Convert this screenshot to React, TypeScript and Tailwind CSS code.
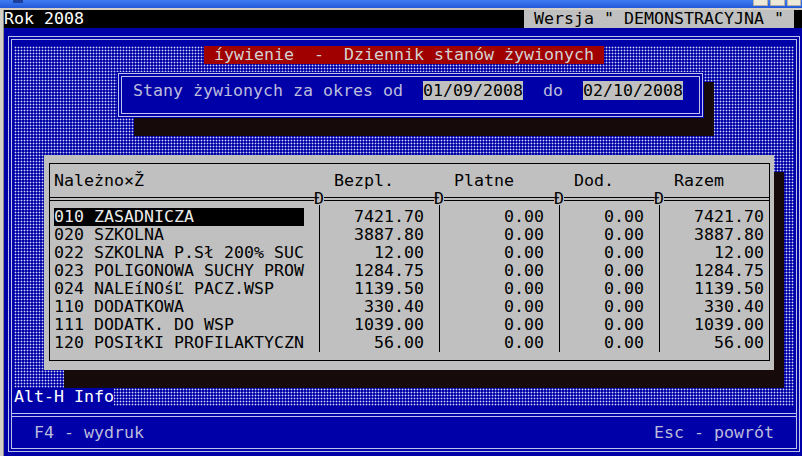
const FONT = "font-['DejaVu_Sans_Mono','Liberation_Mono',monospace] text-[16.61px] leading-[18px]";
const DOTS =
  "[background:radial-gradient(circle_at_1.5px_1.5px,#d4d4f4_0.8px,transparent_1.1px)_0_0/3px_3px_#0000a8]";
const SHADOW = "bg-[#160a0a]";
const LINE = "border-[#c0c0ec]";

const rows = [
  { name: '010 ZASADNICZA', bezpl: '7421.70', razem: '7421.70' },
  { name: '020 SZKOLNA', bezpl: '3887.80', razem: '3887.80' },
  { name: '022 SZKOLNA P.Sł 200% SUC', bezpl: '12.00', razem: '12.00' },
  { name: '023 POLIGONOWA SUCHY PROW', bezpl: '1284.75', razem: '1284.75' },
  { name: '024 NALEíNOśĽ PACZ.WSP', bezpl: '1139.50', razem: '1139.50' },
  { name: '110 DODATKOWA', bezpl: '330.40', razem: '330.40' },
  { name: '111 DODATK. DO WSP', bezpl: '1039.00', razem: '1039.00' },
  { name: '120 POSIłKI PROFILAKTYCZN', bezpl: '56.00', razem: '56.00' },
];

function TitleBar() {
  return (
    <div className="h-[8px] flex bg-gradient-to-b from-[#3f7df2] to-[#2358d6]">
      <div className="ml-[13px] w-[10px] h-[3px] bg-[#1c3f9c]" />
      <div className="flex-1" />
      <div className="flex gap-[2px] pr-[1px] h-[6px]">
        <div className="w-[15px] bg-[#ece9d8] border border-t-0 border-[#b4b0a4]" />
        <div className="w-[15px] bg-[#ece9d8] border border-t-0 border-[#b4b0a4]" />
        <div className="w-[14px] bg-[#ece9d8] border border-t-0 border-[#b4b0a4]" />
      </div>
    </div>
  );
}

function Separator({ w }: { w: string }) {
  return (
    <div className={`${w} pt-[7px]`}>
      <div className="h-[4px] border-y border-black" />
    </div>
  );
}

function Junction() {
  return <div className="w-[10px] h-[15px] leading-[18px]">Đ</div>;
}

function NumberColumn({ values, w, pr }: { values: string[]; w: string; pr: string }) {
  return (
    <div className={`${w} ${pr} pt-[3px] border-l border-black text-right`}>
      {values.map((v, i) => (
        <div key={i} className="h-[18px]">
          {v}
        </div>
      ))}
    </div>
  );
}

function StanyBox() {
  return (
    <div className="w-[587px] h-[46px] bg-[#0000a8] p-[1px]">
      <div className={`h-full border ${LINE} p-[2px]`}>
        <div className={`h-full border ${LINE} pl-[11px] pt-[5px] text-[#bcbcdc] whitespace-pre`}>
          {'Stany żywionych za okres od  '}
          <span className="bg-[#c0c0c0] text-black">01/09/2008</span>
          {'  do  '}
          <span className="bg-[#c0c0c0] text-black">02/10/2008</span>
        </div>
      </div>
    </div>
  );
}

function TablePanel() {
  const zeros = rows.map(() => '0.00');
  return (
    <div className="w-[730px] h-[215px] bg-[#c0c0c0] pt-[8px] pl-[5px] pr-[4px] pb-[9px] text-black">
      <div className="h-full border border-black flex flex-col">
        {/* header */}
        <div className="mt-[8px] h-[18px] pl-[4px] whitespace-pre">
          {'Należno×Ž                   Bezpl.      Platne      Dod.      Razem'}
        </div>

        {/* double line with junctions */}
        <div className="h-[15px] flex">
          <Separator w="w-[264px]" />
          <Junction />
          <Separator w="w-[110px]" />
          <Junction />
          <Separator w="w-[110px]" />
          <Junction />
          <Separator w="w-[90px]" />
          <Junction />
          <Separator w="w-[105px]" />
        </div>

        {/* body */}
        <div className="h-[147px] flex whitespace-pre">
          <div className="w-[269px] pl-[4px] pt-[3px]">
            {rows.map((r, i) => (
              <div key={i} className="h-[18px]">
                {i === 0 ? (
                  <span className="inline-block w-[250px] bg-black text-[#ececec]">{r.name}</span>
                ) : (
                  r.name
                )}
              </div>
            ))}
          </div>
          <NumberColumn values={rows.map((r) => r.bezpl)} w="w-[120px]" pr="pr-[15px]" />
          <NumberColumn values={zeros} w="w-[120px]" pr="pr-[15px]" />
          <NumberColumn values={zeros} w="w-[100px]" pr="pr-[15px]" />
          <NumberColumn values={rows.map((r) => r.razem)} w="w-[110px]" pr="pr-[5px]" />
        </div>
      </div>
    </div>
  );
}

export default function App() {
  return (
    <div className={`w-[802px] h-[456px] overflow-hidden bg-[#0000a8] flex flex-col ${FONT}`}>
      <TitleBar />
      <div className="h-[2px] bg-[#d4d0c8]" />

      <div className="flex flex-1 min-h-0">
        <div className="w-[4px] bg-[#d4d0c8] border-r border-[#8a8a8a]" />

        <div className="flex-1 flex flex-col">
          {/* status line */}
          <div className="h-[18px] bg-black flex whitespace-pre">
            <div className="w-[520px] text-white">Rok 2008</div>
            <div className="w-[270px] bg-[#c0c0c0] text-black">{' Wersja " DEMONSTRACYJNA "'}</div>
          </div>

          {/* main frame */}
          <div className="pl-[4px] pt-[8px] pr-[2px]">
            <div className={`border ${LINE} p-[2px]`}>
              <div className={`border ${LINE} flex flex-col`}>
                <div className="h-[6px]" />

                <div className={`mx-[2px] h-[360px] flex flex-col ${DOTS}`}>
                  <div className="h-[18px] flex">
                    <div className="ml-[190px] w-[400px] bg-[#a00000] text-[#d4d4d4] whitespace-pre">
                      {' íywienie  -  Dziennik stanów żywionych '}
                    </div>
                  </div>

                  <div className="mt-[8px] ml-[103px] flex flex-col">
                    <div className="flex items-start">
                      <StanyBox />
                      <div className={`mt-[10px] w-[10px] h-[36px] ${SHADOW}`} />
                    </div>
                    <div className={`ml-[17px] w-[580px] h-[18px] ${SHADOW}`} />
                  </div>

                  <div className="mt-[19px] ml-[30px] flex flex-col">
                    <div className="flex items-start">
                      <TablePanel />
                      <div className={`mt-[17px] w-[10px] h-[198px] ${SHADOW}`} />
                    </div>
                    <div className={`ml-[20px] w-[720px] h-[18px] ${SHADOW}`} />
                  </div>

                  <div className="h-[18px] flex">
                    <div className="w-[100px] bg-[#0000a8] text-white whitespace-pre">Alt-H Info</div>
                  </div>
                </div>

                <div className="h-[7px]" />
                <div className={`h-[4px] border-y ${LINE}`} />

                {/* key hints */}
                <div className="pt-[7px] pb-[6px] px-[22px] flex justify-between text-[#bcbcdc] whitespace-pre">
                  <span>F4 - wydruk</span>
                  <span>Esc - powrót</span>
                </div>
              </div>
            </div>
          </div>
        </div>
      </div>
    </div>
  );
}
